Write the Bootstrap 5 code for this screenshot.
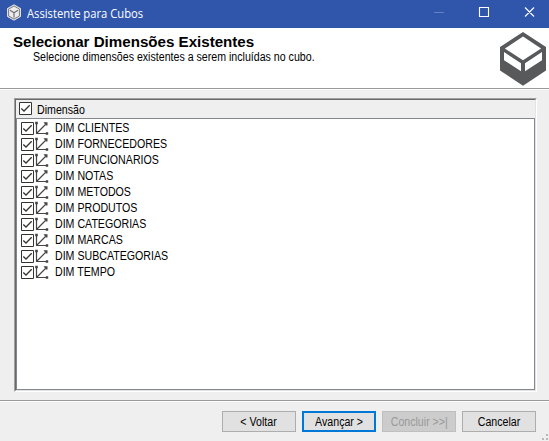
<!DOCTYPE html>
<html lang="pt-BR">
<head>
<meta charset="utf-8">
<title>Assistente para Cubos</title>
<meta name="viewport" content="width=device-width, initial-scale=1">
<link href="https://cdn.jsdelivr.net/npm/bootstrap@5.3.0/dist/css/bootstrap.min.css" rel="stylesheet">
<style>
body{font:12px/16px "Liberation Sans",Arial,sans-serif;color:#000;background:#efefef;width:549px;height:441px}
svg{display:block;flex:none}
.titlebar{height:28px;background:#3056ac;color:#fff;padding-left:6px}
.titlebar .caption{font:12px/16px "Open Sans","Noto Sans",sans-serif;margin-left:5px;margin-top:-1px}
.app-icon{margin-top:-3px}
.wizard-head{height:61px;background:#fff;border-bottom:1px solid #999;padding:6px 2px 0 13px}
.wizard-head h1{font-size:14px;line-height:16px;font-weight:700;margin:0}
.wizard-head p{margin:-1px 0 0 20px}
.head-logo{margin-top:-2px}
.wizard-body{border-top:1px solid #fff;height:311px;padding:8px 12px 0 14px}
.frame{height:294px;border:1px solid;border-color:#a0a0a0 #fff #fff #a0a0a0}
.frame-in{height:292px;border:1px solid;border-color:#696969 #e3e3e3 #e3e3e3 #696969}
.list-head{height:18px;padding:0 0 1px 3px}
.list-head .fit{margin:2px 0 0 5px}
.list-box{height:272px;background:#fff;border:1px solid #828790;padding:1px 0 0 4px}
.list-box li{height:16px}
.list-box .fit{margin-left:6px}
.wizard-foot{height:41px;border-top:1px solid #999;box-shadow:inset 0 1px #fff;padding:10px 13px 0 0;gap:6px}
.wizard-foot .btn{width:74px;height:21px;padding:1px 0 0;font-size:12px;line-height:18px;border:1px solid #adadad;border-radius:0;background:#e1e1e1;color:#000}
.wizard-foot .btn.main{border:2px solid #0078d7;line-height:16px}
.wizard-foot .btn:disabled{background:#ccc;border-color:#bfbfbf;color:#999;opacity:1}
.wizard-foot .fit{transform-origin:50% 50%}
.grip{position:absolute;right:0;bottom:0}
.fit{display:inline-block;transform:scaleX(.885);transform-origin:0 50%;white-space:nowrap}
.caption .fit{transform:scaleX(.935)}
h1 .fit{transform:scaleX(1.08)}
</style>
</head>
<body class="position-relative overflow-hidden">
<svg width="0" height="0" class="position-absolute">
<symbol id="chk" viewBox="0 0 13 13"><path d="M.5.5h12v12H.5z" fill="#fff" stroke="#333"/><path d="M2.300 6.500 5 9l5.700-5.700" fill="none" stroke="#333" stroke-width="1.300"/></symbol>
<symbol id="dim" viewBox="0 0 15 15"><path d="M2.500 2v10.500H13M3 12l8.500-8.500" fill="none" stroke="#444" stroke-width="1.200"/><path d="M1.200.8h2.600v2.400H1.200zM9.500 1.200H13.500V4.500H12zM11.800 11.200h2.400v2.600h-2.400z" fill="#444"/></symbol>
</svg>
<header class="titlebar d-flex align-items-center">
<svg class="app-icon" width="16" height="17" viewBox="0 0 16 17"><path d="M8 .8 14.500 4.500v8L8 16.200 1.500 12.500v-8z" fill="#e9e9e9" stroke="#e0e0e0"/><path d="M8 2 13.400 5v7L8 15l-5.400-3V5z" fill="#ececec" stroke="#707070" stroke-width=".9"/><path d="M4 6.200 8 8.800l4-2.600M8 8.800v4.700" fill="none" stroke="#707070" stroke-width="1.200"/></svg>
<span class="caption flex-grow-1"><span class="fit">Assistente para Cubos</span></span>
<svg width="115" height="28" viewBox="0 0 115 28"><path d="M0 12.500h10" stroke="#6681c1"/><path d="M45.500 7.500h9v9h-9zM91 7.500l9 9M100 7.500l-9 9" fill="none" stroke="#fff" stroke-width="1.100"/></svg>
</header>
<section class="wizard-head d-flex justify-content-between">
<div><h1><span class="fit">Selecionar Dimensões Existentes</span></h1><p><span class="fit">Selecione dimensões existentes a serem incluídas no cubo.</span></p></div>
<svg class="head-logo" width="47" height="54" viewBox="0 0 47 54"><path fill="#58595b" fill-rule="evenodd" d="M23 0 46 15v23.500L23 53.700 0 38.500V15zM23 4.600 4.900 16.600 23 28.300l18.100-11.700zM4 20V28.200l17 11.100v-8zM42 20V28.200L25 39.300v-8z"/></svg>
</section>
<main class="wizard-body">
<div class="frame"><div class="frame-in">
<div class="list-head d-flex align-items-center"><svg width="13" height="13"><use href="#chk"/></svg><span class="fit">Dimensão</span></div>
<ul class="list-box list-unstyled mb-0">
<li class="d-flex align-items-center"><svg width="13" height="13"><use href="#chk"/></svg><svg width="15" height="15"><use href="#dim"/></svg><span class="fit">DIM CLIENTES</span></li>
<li class="d-flex align-items-center"><svg width="13" height="13"><use href="#chk"/></svg><svg width="15" height="15"><use href="#dim"/></svg><span class="fit">DIM FORNECEDORES</span></li>
<li class="d-flex align-items-center"><svg width="13" height="13"><use href="#chk"/></svg><svg width="15" height="15"><use href="#dim"/></svg><span class="fit">DIM FUNCIONARIOS</span></li>
<li class="d-flex align-items-center"><svg width="13" height="13"><use href="#chk"/></svg><svg width="15" height="15"><use href="#dim"/></svg><span class="fit">DIM NOTAS</span></li>
<li class="d-flex align-items-center"><svg width="13" height="13"><use href="#chk"/></svg><svg width="15" height="15"><use href="#dim"/></svg><span class="fit">DIM METODOS</span></li>
<li class="d-flex align-items-center"><svg width="13" height="13"><use href="#chk"/></svg><svg width="15" height="15"><use href="#dim"/></svg><span class="fit">DIM PRODUTOS</span></li>
<li class="d-flex align-items-center"><svg width="13" height="13"><use href="#chk"/></svg><svg width="15" height="15"><use href="#dim"/></svg><span class="fit">DIM CATEGORIAS</span></li>
<li class="d-flex align-items-center"><svg width="13" height="13"><use href="#chk"/></svg><svg width="15" height="15"><use href="#dim"/></svg><span class="fit">DIM MARCAS</span></li>
<li class="d-flex align-items-center"><svg width="13" height="13"><use href="#chk"/></svg><svg width="15" height="15"><use href="#dim"/></svg><span class="fit">DIM SUBCATEGORIAS</span></li>
<li class="d-flex align-items-center"><svg width="13" height="13"><use href="#chk"/></svg><svg width="15" height="15"><use href="#dim"/></svg><span class="fit">DIM TEMPO</span></li>
</ul>
</div></div>
</main>
<footer class="wizard-foot d-flex justify-content-end align-items-start">
<button class="btn" type="button"><span class="fit">&lt; Voltar</span></button>
<button class="btn main" type="button"><span class="fit">Avançar &gt;</span></button>
<button class="btn" type="button" disabled><span class="fit">Concluir &gt;&gt;|</span></button>
<button class="btn" type="button"><span class="fit">Cancelar</span></button>
</footer>
<svg class="grip" width="7" height="7" viewBox="0 0 7 7"><path d="M4 0h2v2H4zM0 4h2v2H0zM4 4h2v2H4z" fill="#b8b8b8"/></svg>
<script src="https://cdn.jsdelivr.net/npm/bootstrap@5.3.0/dist/js/bootstrap.bundle.min.js"></script>
</body>
</html>
